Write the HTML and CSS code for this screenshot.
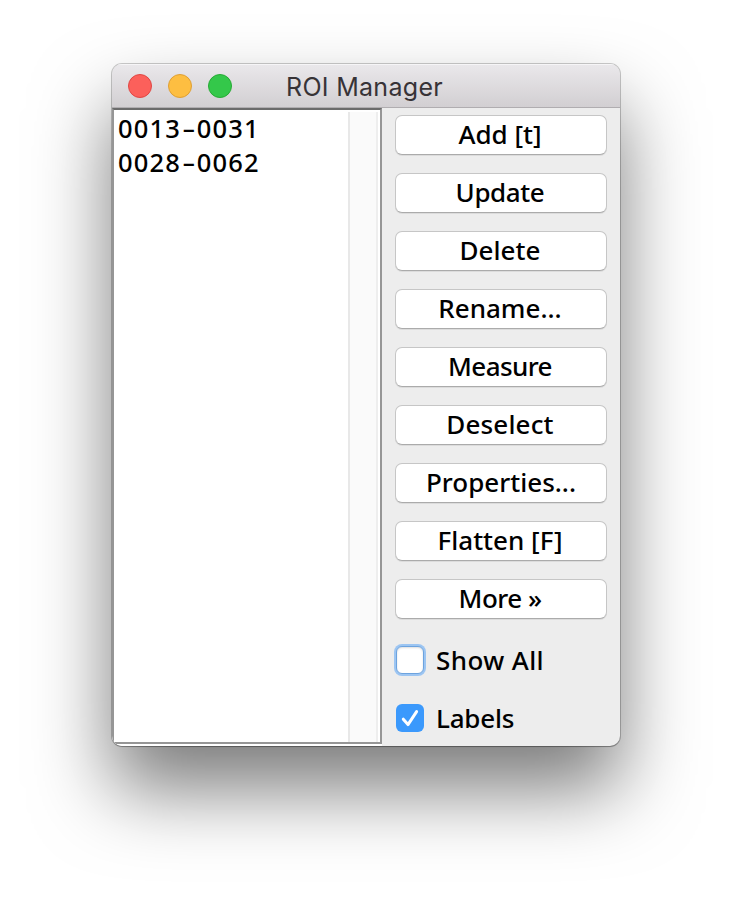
FILE: index.html
```
<!DOCTYPE html>
<html lang="en">
<head>
<meta charset="utf-8">
<title>ROI Manager</title>
<link rel="stylesheet" href="styles.css">
</head>
<body>
<main class="window">
  <header class="titlebar">
    <div class="lights"><i class="light close"></i><i class="light minimize"></i><i class="light zoom"></i></div>
    <h1 class="title">ROI Manager</h1>
  </header>
  <div class="content">
    <section class="list-pane">
      <div class="list">
        <ul class="rois">
          <li>0013<span class="dash">-</span>0031</li>
          <li>0028<span class="dash">-</span>0062</li>
        </ul>
        <div class="track"></div>
      </div>
    </section>
    <section class="actions">
      <button class="btn add"><span>Add [t]</span></button>
      <button class="btn update"><span>Update</span></button>
      <button class="btn delete"><span>Delete</span></button>
      <button class="btn rename"><span>Rename...</span></button>
      <button class="btn measure"><span>Measure</span></button>
      <button class="btn deselect"><span>Deselect</span></button>
      <button class="btn properties"><span>Properties...</span></button>
      <button class="btn flatten"><span>Flatten [F]</span></button>
      <button class="btn more"><span>More »</span></button>
      <div class="check show-all"><i class="box focused"></i><span>Show All</span></div>
      <div class="check labels"><i class="box checked"><svg width="28" height="28" viewBox="0 0 28 28"><path d="M7.3 15.2 12 20.6 20.6 7.6" fill="none" stroke="#fff" stroke-width="3" stroke-linecap="round" stroke-linejoin="round"/></svg></i><span>Labels</span></div>
    </section>
  </div>
</main>
</body>
</html>
```
FILE: styles.css
```
* { box-sizing: border-box; }
body { margin: 0; padding: 64px 112px 0; height: 906px; background: #fff; overflow: hidden; color: #000; font-family: "Noto Sans", sans-serif; }
.window { width: 508px; height: 682px; border-radius: 10px; background: #ededed; overflow: hidden; box-shadow: 0 0 0 1px rgba(0,0,0,.2), 0 1px 1px rgba(0,0,0,.2), 0 43px 78px rgba(0,0,0,.52); }
.titlebar { display: grid; grid-template-columns: 175px 1fr; height: 44px; padding-left: 16px; background: linear-gradient(#eae8eb, #d2cfd2); border-bottom: 1px solid #b0adb0; box-shadow: inset 0 1px 0 #f6f5f7; }
.lights { display: flex; gap: 16px; padding-top: 10px; margin-right: 10px; }
.light { width: 24px; height: 24px; border-radius: 50%; }
.close { background: #fc605b; border: 1px solid #df4744; }
.minimize { background: #fdbe41; border: 1px solid #de9f34; }
.zoom { background: #34c84a; border: 1px solid #27aa35; }
.title { margin: 0; margin-left: -17px; white-space: nowrap; font: 400 25px/44px Inter, sans-serif; letter-spacing: .3px; color: #373337; padding-top: 1px; }
.content { display: flex; height: 638px; }
.list-pane { width: 270px; background: #fff; padding-bottom: 2px; }
.list { display: flex; justify-content: space-between; height: 636px; border: 2px solid #969696; border-top-color: #6b6b6b; }
.rois { list-style: none; margin: 0; padding: 1px 0 0 4px; font-size: 25.5px; line-height: 34px; font-weight: 500; letter-spacing: 1.2px; }
.rois li { height: 34px; white-space: nowrap; }
.dash { display: inline-block; width: 15.5px; text-align: center; letter-spacing: 0; transform: scaleX(1.6); }
.track { width: 30px; margin: 2px 2px 0 0; background: #fafafa; border-left: 2px solid #e8e8e8; border-right: 2px solid #eee; }
.actions { display: flex; flex-direction: column; padding: 7px 0 0 13px; }
.btn { width: 212px; height: 40px; margin: 0 0 18px; padding: 0 2px 2px 0; display: flex; align-items: center; justify-content: center; background: #fff; border: 1px solid #c6c6c6; border-bottom-color: #ababab; border-radius: 7px; box-shadow: 0 1px 0 rgba(0,0,0,.07); font: 500 26px/34px "Noto Sans", sans-serif; color: #000; }
.update { letter-spacing: -.4px; }
.measure { letter-spacing: -.6px; }
.deselect { letter-spacing: .15px; }
.properties { padding-right: 0; }
.more { letter-spacing: -.5px; }
.check { display: flex; align-items: center; height: 30px; font-size: 26px; line-height: 34px; font-weight: 500; }
.show-all { margin-top: 8px; letter-spacing: .4px; }
.labels { margin-top: 28px; letter-spacing: -.2px; }
.box { display: block; width: 28px; height: 28px; margin: 0 12px 0 1px; border-radius: 6px; }
.focused { background: #fff; border: 1px solid #6da3de; box-shadow: 0 0 0 2px #9cc5f2, inset 0 1px 2px #ddd; }
.checked { background: #3b99fc; }
.box svg { display: block; }
.check span, .btn span { white-space: pre; }
```
